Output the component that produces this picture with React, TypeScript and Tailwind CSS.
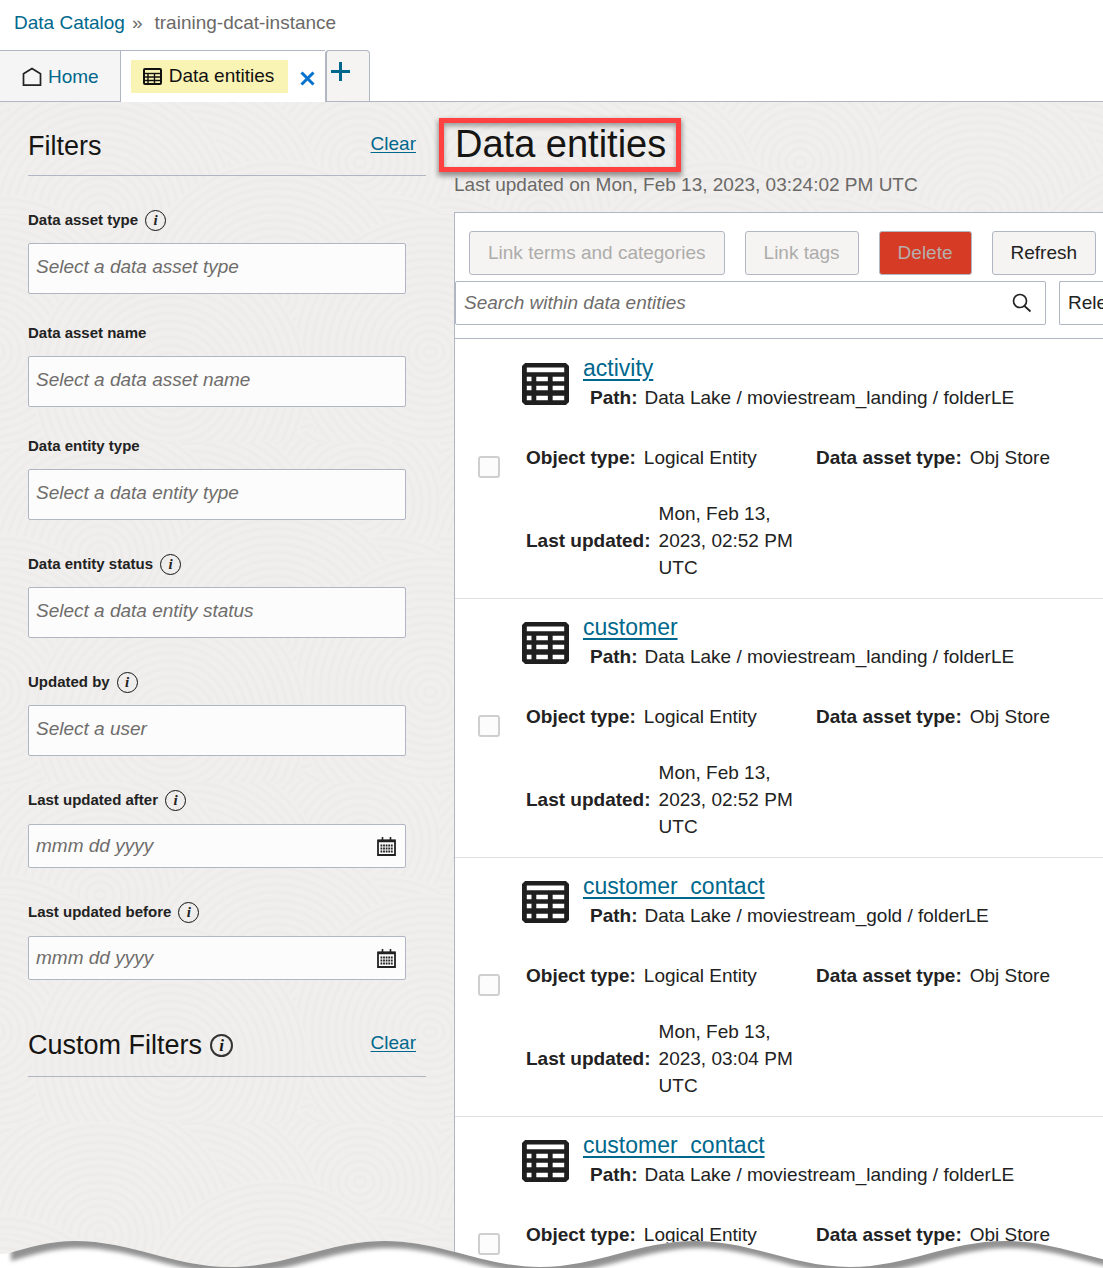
import React from "react";

type Field = { id: string; label: string; placeholder: string; info?: boolean; date?: boolean };

const fields: Field[] = [
  { id: "asset-type", label: "Data asset type", placeholder: "Select a data asset type", info: true },
  { id: "asset-name", label: "Data asset name", placeholder: "Select a data asset name" },
  { id: "entity-type", label: "Data entity type", placeholder: "Select a data entity type" },
  { id: "entity-status", label: "Data entity status", placeholder: "Select a data entity status", info: true },
  { id: "updated-by", label: "Updated by", placeholder: "Select a user", info: true },
  { id: "updated-after", label: "Last updated after", placeholder: "mmm dd yyyy", info: true, date: true },
  { id: "updated-before", label: "Last updated before", placeholder: "mmm dd yyyy", info: true, date: true },
];

type EntityData = { name: string; path: string; updated?: string };

const entities: EntityData[] = [
  { name: "activity", path: "Data Lake / moviestream_landing / folderLE", updated: "Mon, Feb 13, 2023, 02:52 PM UTC" },
  { name: "customer", path: "Data Lake / moviestream_landing / folderLE", updated: "Mon, Feb 13, 2023, 02:52 PM UTC" },
  { name: "customer_contact", path: "Data Lake / moviestream_gold / folderLE", updated: "Mon, Feb 13, 2023, 03:04 PM UTC" },
  { name: "customer_contact", path: "Data Lake / moviestream_landing / folderLE" },
];

function TableIcon({ className }: { className: string }) {
  return (
    <svg viewBox="0 0 46 41" className={className} fill="currentColor" fillRule="evenodd" aria-hidden="true">
      <path d="M3 0H43L46 3V38L43 41H3L0 38V3ZM4.7 4.3V9H41.3V4.3ZM4.7 13.3V17.7H9.3V13.3ZM14 13.3V17.7H25.3V13.3ZM30 13.3V17.7H41.3V13.3ZM4.7 22.3V26.7H9.3V22.3ZM14 22.3V26.7H25.3V22.3ZM30 22.3V26.7H41.3V22.3ZM4.7 32V36.5H9.3V32ZM14 32V36.5H25.3V32ZM30 32V36.5H41.3V32Z" />
    </svg>
  );
}

function SmallTableIcon() {
  return (
    <svg viewBox="0 0 19 17" className="h-[17px] w-[19px]" fill="none" stroke="currentColor" aria-hidden="true">
      <rect x="1" y="1" width="17" height="15" rx="1" strokeWidth="2" />
      <path d="M1 5.5H18" strokeWidth="1.4" />
      <path d="M1 9H18M1 12.5H18M5 5V16M11.5 5V16" strokeWidth="1.4" />
    </svg>
  );
}

function HomeIcon() {
  return (
    <svg viewBox="0 0 20 20" className="size-5 text-[#222]" fill="none" stroke="currentColor" strokeWidth="1.7" aria-hidden="true">
      <path d="M1.5 18.2V6.8L10 1.5L18.5 6.8V18.2Z" />
    </svg>
  );
}

function CalendarIcon() {
  return (
    <svg viewBox="0 0 19 19" className="size-[19px]" fill="none" stroke="currentColor" aria-hidden="true">
      <path d="M1 3.5H18V18H1Z" strokeWidth="1.8" />
      <path d="M1 4H18" strokeWidth="2.5" />
      <path d="M5.5 0V5M13.5 0V5" strokeWidth="1.6" />
      <path d="M3.5 8.5H16M3.5 11.5H16M3.5 14.5H16" strokeWidth="1.9" strokeDasharray="1.8 .8" />
    </svg>
  );
}

function InfoButton({ topic, large }: { topic: string; large?: boolean }) {
  return (
    <button
      type="button"
      aria-label={"About " + topic}
      className={
        large
          ? "flex size-[23px] items-center justify-center rounded-full border-2 border-[#333] font-['Liberation_Serif',serif] text-[17px] leading-none font-bold italic"
          : "flex size-[21px] items-center justify-center rounded-full border border-[#111] font-['Liberation_Serif',serif] text-[15px] leading-none font-bold italic"
      }
    >
      i
    </button>
  );
}

const radii = [6, 14, 22, 30, 38, 46, 54, 62, 70, 78, 86, 94, 102, 110, 118, 126, 134];
const discs = [
  [0, 340], [220, 340], [0, 0], [220, 0], [360, 60], [20, 60], [360, 400], [190, 110], [100, 113], [380, 230], [0, 230], [275, 195], [430, 250], [-10, 250], [170, 280],
];

function Texture() {
  return (
    <svg className="absolute inset-0 h-full w-full" aria-hidden="true">
      <defs>
        <pattern id="rings" width="440" height="340" patternUnits="userSpaceOnUse">
          <rect width="440" height="340" fill="#f0efed" />
          {discs.map(([x, y], n) => (
            <g key={n} fill="none" stroke="#edecea" strokeWidth="3">
              <circle cx={x} cy={y} r="138" fill="#f0efed" stroke="none" />
              {radii.map((r) => (
                <ellipse key={r} cx={x} cy={y} rx={r} ry={r - 1} />
              ))}
            </g>
          ))}
        </pattern>
      </defs>
      <rect width="100%" height="100%" fill="url(#rings)" />
    </svg>
  );
}

function TornEdge() {
  const wave =
    "C28 20 48 13 75 13C131 13 174 39 230 39C286 39 329 13 385 13C441 13 484 39 540 39C596 39 639 13 695 13C751 13 794 39 850 39C906 39 949 13 1005 13C1061 13 1104 39 1160 39";
  return (
    <svg viewBox="0 0 1103 40" preserveAspectRatio="none" className="pointer-events-none absolute bottom-0 left-0 h-10 w-full" aria-hidden="true">
      <defs>
        <clipPath id="below">
          <path d={"M-10 26H5" + wave + "V60H-10Z"} />
        </clipPath>
        <filter id="soft" x="-5%" y="-50%" width="110%" height="200%">
          <feGaussianBlur stdDeviation="2" />
        </filter>
      </defs>
      <g clipPath="url(#below)">
        <rect x="-10" width="1200" height="60" fill="#fff" />
        <path transform="translate(4 7)" d={"M7 26" + wave + "V-20H7Z"} fill="#929292" filter="url(#soft)" />
      </g>
    </svg>
  );
}

function FilterField({ field }: { field: Field }) {
  return (
    <div className={field.info ? "mt-[33px]" : "mt-7"}>
      <div className="flex h-[22px] items-center gap-[7px]">
        <label htmlFor={field.id} className="text-[15px] font-bold">
          {field.label}
        </label>
        {field.info && <InfoButton topic={field.label} />}
      </div>
      <div className={field.date ? "relative mt-[13px] mr-5" : "relative mt-3 mr-5"}>
        <input
          id={field.id}
          type="text"
          placeholder={field.placeholder}
          className={
            field.date
              ? "block h-11 w-full rounded-xs border border-[#b0b7c3] bg-[#fcfcfc] px-[7px] italic placeholder:text-[#6f6d6b]"
              : "block h-[51px] w-full rounded-xs border border-[#b0b7c3] bg-[#fcfcfc] px-[7px] pb-1 italic placeholder:text-[#6f6d6b]"
          }
        />
        {field.date && (
          <button type="button" aria-label={"Pick a date for " + field.label} className="absolute inset-y-0 right-2.5 flex items-center">
            <CalendarIcon />
          </button>
        )}
      </div>
    </div>
  );
}

function Entity({ entity, index }: { entity: EntityData; index: number }) {
  return (
    <li className="flex h-[259px] border-b border-[#dfdfdf] pl-[23px]">
      <input
        type="checkbox"
        aria-label={"Select " + entity.name + " " + (index + 1)}
        className="mb-1 size-[22px] shrink-0 appearance-none self-center rounded-[3px] border-2 border-[#d0cfcf] bg-[#fcfcfc]"
      />
      <div className="ml-[22px] min-w-0 flex-1">
        <div className="flex pt-3.5">
          <TableIcon className="mt-[9px] h-[42px] w-[47px] shrink-0 text-[#1f1f20]" />
          <div className="ml-3.5">
            <a href="#" className="block w-fit text-[23px] leading-7 text-[#00688c] underline underline-offset-3">
              {entity.name}
            </a>
            <p className="ml-[7px] flex gap-[7px] leading-8 whitespace-nowrap">
              <b>Path:</b> {entity.path}
            </p>
          </div>
        </div>
        <dl className="mt-[30px] ml-1 grid grid-cols-[290px_1fr] gap-y-7 leading-7 whitespace-nowrap">
          <div className="flex gap-2">
            <dt className="font-bold">Object type:</dt>
            <dd>Logical Entity</dd>
          </div>
          <div className="flex gap-2">
            <dt className="font-bold">Data asset type:</dt>
            <dd>Obj Store</dd>
          </div>
          {entity.updated && (
            <div className="flex items-center gap-2">
              <dt className="font-bold">Last updated:</dt>
              <dd className="w-36 leading-[27px] whitespace-normal">{entity.updated}</dd>
            </div>
          )}
        </dl>
      </div>
    </li>
  );
}

const plainButton = "h-11 shrink-0 rounded-[3px] border border-[#b0b7c3] bg-[#f5f4f2] px-[18px] whitespace-nowrap disabled:text-[#adacab]";

export default function App() {
  return (
    <div className="relative flex h-screen flex-col overflow-hidden bg-white font-['Liberation_Sans',Arial,sans-serif] text-[19px] leading-6 text-[#222]">
      <nav aria-label="Breadcrumb" className="flex h-[50px] shrink-0 items-start pt-[11px] pl-3.5 text-[#6b6967]">
        <a href="#" className="text-[#00688c]">Data Catalog</a>
        <span className="mr-3 ml-[7px]">»</span>
        <span>training-dcat-instance</span>
      </nav>

      <div className="flex h-[52px] shrink-0">
        <button type="button" className="flex items-center gap-1.5 border border-l-0 border-[#b0b7c3] bg-[#f5f5f5] pt-px pr-[21px] pl-[22px] text-[#00688c]">
          <HomeIcon />
          Home
        </button>
        <div className="flex items-center border-t border-[#b0b7c3] pr-2.5 pl-2.5">
          <button type="button" className="mb-px flex h-[33px] items-center gap-[7px] bg-[#faf4b4] pr-3.5 pl-3 text-[#111]">
            <SmallTableIcon />
            Data entities
          </button>
          <button type="button" aria-label="Close tab" className="mt-1 ml-3 text-[#0572ce]">
            <svg viewBox="0 0 15 15" className="size-[15px]" stroke="currentColor" strokeWidth="3" aria-hidden="true">
              <path d="M1.5 1.5L13.5 13.5M13.5 1.5L1.5 13.5" />
            </svg>
          </button>
        </div>
        <button type="button" aria-label="Open a new tab" className="flex w-[45px] items-start rounded-t-sm border border-l-2 border-[#b0b7c3] bg-[#f5f4f2] pt-[11px] pl-1 text-[#00688c]">
          <svg viewBox="0 0 20 20" className="size-5" stroke="currentColor" strokeWidth="3" aria-hidden="true">
            <path d="M9.5 0V19M0 9.5H19" />
          </svg>
        </button>
        <div className="flex-1 border-b border-[#b0b7c3]" />
      </div>

      <div className="relative flex min-h-0 flex-1">
        <Texture />
        <aside className="relative w-[454px] shrink-0 pr-7 pl-7">
          <div className="flex h-[74px] items-center justify-between border-b border-[#b0b7c3] pt-[15px] pr-2.5">
            <h2 className="text-[27px] leading-8 text-[#161513]">Filters</h2>
            <a href="#" className="mb-1 text-[#00688c] underline underline-offset-2">Clear</a>
          </div>
          {fields.map((field) => (
            <FilterField key={field.id} field={field} />
          ))}
          <div className="mt-[23px] flex h-[74px] items-center justify-between border-b border-[#b0b7c3] pt-[11px] pr-2.5">
            <h2 className="flex items-center gap-2 text-[27px] leading-8 text-[#161513]">
              Custom Filters
              <InfoButton topic="Custom Filters" large />
            </h2>
            <a href="#" className="mb-1 text-[#00688c] underline underline-offset-2">Clear</a>
          </div>
        </aside>

        <main className="relative flex min-w-0 flex-1 flex-col">
          <h1 className="mt-4 -ml-[15px] h-[54px] w-fit border-[5px] border-[#ff4141] pr-2.5 pl-[11px] text-[38px] leading-[42px] text-[#161513] shadow-[0_3px_5px_1px_rgba(0,0,0,0.4),inset_0_3px_5px_0_rgba(0,0,0,0.35)]">
            Data entities
          </h1>
          <p className="pt-px text-[#6b6967]">Last updated on Mon, Feb 13, 2023, 03:24:02 PM UTC</p>
          <section aria-label="Entities" className="mt-[15px] min-h-0 flex-1 overflow-hidden border-t border-l border-[#b0b7c3] bg-white">
            <div className="border-b border-[#b0b7c3] pt-[18px] pb-[13px]">
              <div className="flex gap-5 pl-3.5">
                <button type="button" disabled className={plainButton}>Link terms and categories</button>
                <button type="button" disabled className={plainButton}>Link tags</button>
                <button type="button" disabled className="h-11 shrink-0 rounded-[3px] border border-[#b0b7c3] bg-[#d63b25] px-[18px] text-[#b5aeab]">Delete</button>
                <button type="button" className={plainButton}>Refresh</button>
              </div>
              <div className="mt-1.5 flex gap-[13px]">
                <div className="relative flex-1">
                  <input
                    type="search"
                    aria-label="Search within data entities"
                    placeholder="Search within data entities"
                    className="block h-11 w-full rounded-xs border border-[#b0b7c3] bg-white px-2 italic placeholder:text-[#6f6d6b]"
                  />
                  <button type="button" aria-label="Search" className="absolute inset-y-0 right-3.5 flex items-center">
                    <svg viewBox="0 0 20 20" className="size-5" fill="none" stroke="currentColor" strokeWidth="1.7" aria-hidden="true">
                      <circle cx="8" cy="8" r="6.5" />
                      <path d="M12.5 13L18.5 18.5" />
                    </svg>
                  </button>
                </div>
                <select aria-label="Sort by" className="h-11 w-11 appearance-none rounded-l-xs border border-r-0 border-[#b0b7c3] bg-white pl-2">
                  <option>Relevance</option>
                </select>
              </div>
            </div>
            <ul className="pt-px">
              {entities.map((entity, index) => (
                <Entity key={index} entity={entity} index={index} />
              ))}
            </ul>
          </section>
        </main>
      </div>
      <TornEdge />
    </div>
  );
}
